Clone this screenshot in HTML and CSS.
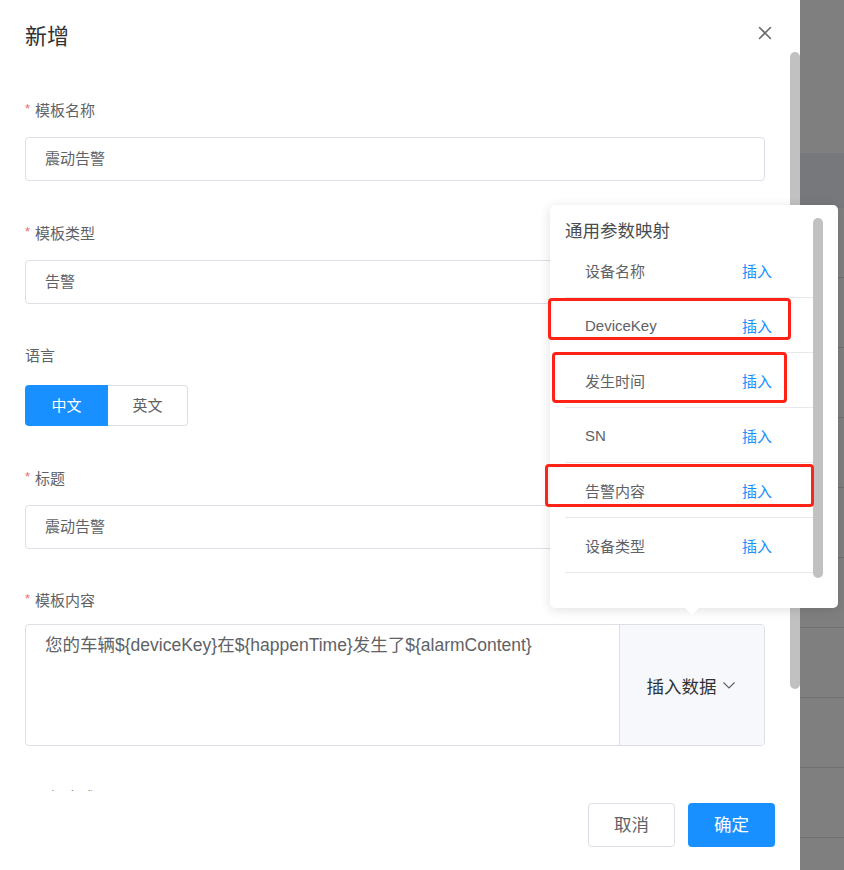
FILE: index.html
```html
<!DOCTYPE html>
<html lang="zh">
<head>
<meta charset="utf-8">
<title>新增</title>
<link rel="stylesheet" href="styles.css">
</head>
<body>
<div class="drawer">
  <div class="main">
    <div class="header">
      <div class="title">新增</div>
      <svg class="close" width="14" height="14" viewBox="0 0 14 14"><path d="M1.5 1.5 L12.5 12.5 M12.5 1.5 L1.5 12.5" stroke="#6b6b6b" stroke-width="1.6" fill="none" stroke-linecap="round"/></svg>
    </div>
    <div class="body">
      <div class="item item-a">
        <div class="label"><span class="req">*</span>模板名称</div>
        <div class="input">震动告警</div>
      </div>
      <div class="item item-b">
        <div class="label"><span class="req">*</span>模板类型</div>
        <div class="input">告警</div>
      </div>
      <div class="item item-c">
        <div class="label">语言</div>
        <div class="radio-group">
          <div class="radio radio-on">中文</div>
          <div class="radio radio-off">英文</div>
        </div>
      </div>
      <div class="item item-d">
        <div class="label"><span class="req">*</span>标题</div>
        <div class="input">震动告警</div>
      </div>
      <div class="item item-e">
        <div class="label"><span class="req">*</span>模板内容</div>
        <div class="content-box">
          <div class="textarea">您的车辆${deviceKey}在${happenTime}发生了${alarmContent}</div>
          <div class="insert-data">插入数据<svg class="chev" width="14" height="14" viewBox="0 0 14 14"><polyline points="1.5,4.5 7,10 12.5,4.5" stroke="#606266" stroke-width="1.2" fill="none"/></svg></div>
        </div>
      </div>
      <div class="item item-f">
        <div class="label"><span class="req">*</span>通知方式</div>
      </div>
    </div>
    <div class="footer">
      <div class="btn btn-cancel">取消</div>
      <div class="btn btn-ok">确定</div>
    </div>
  </div>
  <div class="track"><div class="thumb"></div></div>
</div>
<div class="backdrop">
  <div class="bd-top"></div>
  <div class="bd-head"></div>
  <div class="bd-row"></div>
  <div class="bd-row"></div>
  <div class="bd-row"></div>
  <div class="bd-row"></div>
  <div class="bd-row"></div>
  <div class="bd-row"></div>
  <div class="bd-row"></div>
  <div class="bd-row"></div>
  <div class="bd-row"></div>
</div>

<div class="popover">
  <div class="pop-main">
    <div class="pop-title">通用参数映射</div>
    <div class="pop-row"><span class="pop-name">设备名称</span><span class="pop-link">插入</span></div>
    <div class="pop-row"><span class="pop-name">DeviceKey</span><span class="pop-link">插入</span></div>
    <div class="pop-row"><span class="pop-name">发生时间</span><span class="pop-link">插入</span></div>
    <div class="pop-row"><span class="pop-name">SN</span><span class="pop-link">插入</span></div>
    <div class="pop-row"><span class="pop-name">告警内容</span><span class="pop-link">插入</span></div>
    <div class="pop-row"><span class="pop-name">设备类型</span><span class="pop-link">插入</span></div>
  </div>
  <div class="pop-track"><div class="pop-thumb"></div></div>
  <div class="pop-arrow"></div>
</div>

<div class="mark mark-1"></div>
<div class="mark mark-2"></div>
<div class="mark mark-3"></div>
</body>
</html>
```

FILE: styles.css
```css
* { box-sizing: border-box; }
html, body { margin: 0; padding: 0; }
body {
  width: 844px;
  height: 870px;
  overflow: hidden;
  display: flex;
  position: relative;
  font-family: "Liberation Sans", "Noto Sans CJK SC", sans-serif;
  color: #606266;
  background: #7f7f7f;
}
.drawer {
  width: 800px;
  height: 870px;
  background: #fff;
  display: flex;
  flex-shrink: 0;
}
.main {
  width: 790px;
  height: 870px;
  display: flex;
  flex-direction: column;
}
.header {
  display: flex;
  justify-content: space-between;
  align-items: flex-start;
  padding: 23px 18px 0 25px;
  height: 51px;
  flex-shrink: 0;
}
.title {
  font-size: 22px;
  line-height: 28px;
  color: #303133;
}
.close { margin-top: 3px; }
.body {
  flex: 1;
  overflow: hidden;
  padding: 50px 25px 0 25px;
}
.item { display: flex; flex-direction: column; }
.label {
  font-size: 15px;
  line-height: 20px;
  color: #606266;
  display: flex;
  align-items: center;
}
.req {
  color: #f56c6c;
  font-size: 13px;
  margin-right: 5px;
  position: relative;
  top: -2px;
}
.input {
  height: 44px;
  border: 1px solid #dcdfe6;
  border-radius: 4px;
  padding: 0 19px;
  font-size: 15px;
  line-height: 42px;
  color: #606266;
}
.item-a .input, .item-b .input, .item-d .input { margin-top: 16px; }
.item-a { margin-bottom: 43px; }
.item-b { margin-bottom: 42px; }
.item-c { margin-bottom: 43px; }
.item-d { margin-bottom: 42px; }
.item-e { margin-bottom: 42px; }
.radio-group {
  display: flex;
  margin-top: 19px;
  height: 41px;
}
.radio {
  font-size: 15px;
  line-height: 41px;
  text-align: center;
}
.radio-on {
  width: 83px;
  background: #1890ff;
  color: #fff;
  border-radius: 4px 0 0 4px;
}
.radio-off {
  width: 80px;
  border: 1px solid #dcdfe6;
  border-left: none;
  border-radius: 0 4px 4px 0;
  line-height: 39px;
  color: #606266;
}
.content-box {
  margin-top: 13px;
  height: 122px;
  border: 1px solid #dcdfe6;
  border-radius: 4px;
  display: flex;
}
.textarea {
  flex: 1;
  padding: 8px 19px;
  font-size: 17.5px;
  line-height: 24px;
  color: #606266;
  white-space: nowrap;
}
.insert-data {
  width: 145px;
  background: #f7f8fc;
  border-left: 1px solid #dcdfe6;
  border-radius: 0 3px 3px 0;
  display: flex;
  align-items: center;
  justify-content: center;
  font-size: 17.5px;
  color: #303133;
  gap: 5px;
  padding-right: 2px;
}
.footer {
  height: 79px;
  flex-shrink: 0;
  background: #fff;
  display: flex;
  justify-content: flex-end;
  gap: 13px;
  padding: 12px 15px 0 0;
}
.btn {
  width: 87px;
  height: 44px;
  border-radius: 4px;
  font-size: 17.5px;
  text-align: center;
  line-height: 44px;
}
.btn-cancel {
  border: 1px solid #dcdfe6;
  color: #606266;
  line-height: 42px;
}
.btn-ok {
  background: #1890ff;
  color: #fff;
}
.track {
  width: 10px;
  height: 870px;
  padding-top: 52px;
}
.thumb {
  width: 10px;
  height: 637px;
  background: #c1c1c1;
  border-radius: 5px;
}
.backdrop {
  flex: 1;
  display: flex;
  flex-direction: column;
  background: #7f7f7f;
}
.bd-top { height: 153px; background: #7f7f7f; flex-shrink: 0; }
.bd-head { height: 55px; background: #76787c; flex-shrink: 0; }
.bd-row { height: 70px; border-bottom: 1px solid #6f6f6f; flex-shrink: 0; }

.popover {
  position: absolute;
  left: 550px;
  top: 205px;
  width: 288px;
  height: 403px;
  background: #fff;
  border-radius: 5px;
  box-shadow: 0 2px 12px 0 rgba(0, 0, 0, 0.12);
  display: flex;
  padding: 15px 15px 0 15px;
}
.pop-main { width: 248px; }
.pop-title {
  font-size: 17.5px;
  line-height: 23px;
  color: #4a4c50;
}
.pop-row {
  height: 55px;
  border-bottom: 1px solid #e6e8ee;
  display: flex;
  align-items: center;
  justify-content: space-between;
  padding: 0 41px 0 20px;
  font-size: 15px;
}
.pop-name { color: #606266; }
.pop-link { color: #1890ff; }
.pop-track { width: 10px; margin-top: -2px; }
.pop-thumb {
  width: 10px;
  height: 360px;
  background: #c1c1c1;
  border-radius: 5px;
}
.pop-arrow {
  position: absolute;
  left: 135px;
  bottom: -7px;
  width: 0;
  height: 0;
  border-left: 7px solid transparent;
  border-right: 7px solid transparent;
  border-top: 7px solid #fff;
}
.mark {
  position: absolute;
  border: 3px solid #ff2217;
  border-radius: 4px;
}
.mark-1 { left: 548px; top: 298px; width: 243px; height: 42px; }
.mark-2 { left: 552px; top: 352px; width: 235px; height: 51px; }
.mark-3 { left: 545px; top: 464px; width: 269px; height: 43px; }
```
